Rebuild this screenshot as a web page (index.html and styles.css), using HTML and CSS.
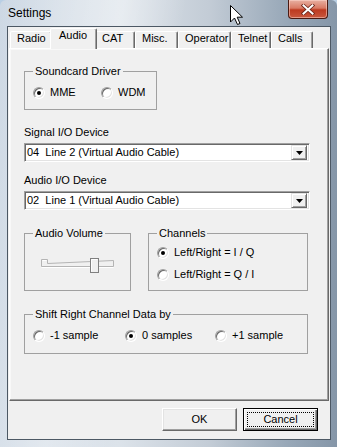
FILE: index.html
```html
<!DOCTYPE html>
<html lang="en">
<head>
    <meta charset="UTF-8">
    <title>Settings</title>
    <link rel="stylesheet" href="styles.css">
</head>
<body>
    <div class="window">
        <div class="titlebar">
            <span class="title">Settings</span>
            <div class="close-btn">
                <svg width="14" height="11" viewBox="0 0 14 11">
                    <path d="M2.5 1.5 L11.5 9.5 M11.5 1.5 L2.5 9.5" stroke="#6a2418" stroke-width="3.6" stroke-linecap="square"/>
                    <path d="M2.5 1.5 L11.5 9.5 M11.5 1.5 L2.5 9.5" stroke="#fff" stroke-width="2" stroke-linecap="square"/>
                </svg>
            </div>
        </div>

        <div class="client">
            <div class="tabs">
                <div class="tab tab-radio">Radio</div>
                <div class="tab tab-audio active">Audio</div>
                <div class="tab tab-cat">CAT</div>
                <div class="tab tab-misc">Misc.</div>
                <div class="tab tab-operator">Operator</div>
                <div class="tab tab-telnet">Telnet</div>
                <div class="tab tab-calls">Calls</div>
            </div>

            <div class="panel">
                <fieldset class="group group-driver">
                    <legend>Soundcard Driver</legend>
                    <div class="radio-row driver-row">
                        <div class="radio"><span class="dot on"></span>MME</div>
                        <div class="radio"><span class="dot"></span>WDM</div>
                    </div>
                </fieldset>

                <div class="field-label">Signal I/O Device</div>
                <div class="combo">
                    <span class="combo-text">04&nbsp; Line 2 (Virtual Audio Cable)</span>
                    <span class="combo-btn"><svg width="7" height="4"><polygon points="0,0 7,0 3.5,4" fill="#000"/></svg></span>
                </div>

                <div class="field-label second">Audio I/O Device</div>
                <div class="combo">
                    <span class="combo-text">02&nbsp; Line 1 (Virtual Audio Cable)</span>
                    <span class="combo-btn"><svg width="7" height="4"><polygon points="0,0 7,0 3.5,4" fill="#000"/></svg></span>
                </div>

                <div class="group-row">
                    <fieldset class="group group-volume">
                        <legend>Audio Volume</legend>
                        <svg class="slider" width="73" height="17" viewBox="0 0 73 17">
                            <path d="M0.5 9.5 V2.5 H6.5 V6.5 L72.5 3.5 V9.5 Z" fill="none" stroke="#b4b4b4"/>
                            <path d="M0.5 10.5 H72.5 M1.5 3.5 H5.5" stroke="#fff"/>
                            <rect x="49.5" y="1.5" width="8" height="14" fill="#f0f0f0" stroke="#808080"/>
                            <path d="M50.5 14.5 V2.5 H56.5" stroke="#fff" fill="none"/>
                        </svg>
                    </fieldset>
                    <fieldset class="group group-channels">
                        <legend>Channels</legend>
                        <div class="radio"><span class="dot on"></span>Left/Right = I / Q</div>
                        <div class="radio"><span class="dot"></span>Left/Right = Q / I</div>
                    </fieldset>
                </div>

                <fieldset class="group group-shift">
                    <legend>Shift Right Channel Data by</legend>
                    <div class="radio-row shift-row">
                        <div class="radio"><span class="dot"></span>-1 sample</div>
                        <div class="radio"><span class="dot on"></span>0 samples</div>
                        <div class="radio"><span class="dot"></span>+1 sample</div>
                    </div>
                </fieldset>
            </div>

            <div class="buttons">
                <button class="btn">OK</button>
                <button class="btn btn-default"><span class="focus">Cancel</span></button>
            </div>
        </div>

        <svg class="cursor" width="14" height="21" viewBox="0 0 14 21">
            <polygon points="0.5,0.5 0.5,17 4.5,13 7.5,19.5 10,18.5 7.2,12.2 12.5,12.2" fill="#fff" stroke="#000"/>
        </svg>
    </div>
</body>
</html>
```

FILE: styles.css
```css
* {
    box-sizing: border-box;
}
html, body {
    margin: 0;
    padding: 0;
}
body {
    width: 337px;
    height: 447px;
    overflow: hidden;
    font-family: "Liberation Sans", Arial, sans-serif;
    font-size: 11px;
    line-height: 13px;
    color: #000;
    background: #b9cfe4;
}

/* Vista glass frame */
.window {
    position: relative;
    height: 447px;
    padding: 0 6px 7px 7px;
    display: flex;
    flex-direction: column;
    border-radius: 6px 6px 0 0;
    background:
        linear-gradient(100deg, rgba(255,255,255,0) 0%, rgba(255,255,255,0.35) 30%, rgba(255,255,255,0) 45%),
        linear-gradient(to right, #cdd8e4 0%, #dce3ea 35%, #c3ccd6 62%, #98a8b8 85%, #8596a8 100%);
}
.titlebar {
    height: 26px;
    flex: none;
    display: flex;
    justify-content: space-between;
    align-items: flex-start;
}
.title {
    font-size: 12px;
    line-height: 15px;
    padding: 6px 0 0 1px;
    color: #000;
}
.close-btn {
    width: 40px;
    height: 19px;
    margin-right: 3px;
    border: 1px solid #4a1a12;
    border-top: none;
    border-radius: 0 0 4px 4px;
    display: flex;
    align-items: center;
    justify-content: center;
    background: linear-gradient(#e8b0a2 0%, #d97a64 45%, #bd3a20 55%, #c9583e 100%);
    box-shadow: inset 0 0 0 1px rgba(255, 220, 210, 0.5);
}
.cursor {
    position: absolute;
    left: 230px;
    top: 5px;
}

/* client area */
.client {
    flex: 1;
    border: 1px solid #4c5864;
    background: #f0f0f0;
    padding: 1px 1px 0 1px;
    display: flex;
    flex-direction: column;
}

/* tabs */
.tabs {
    height: 20px;
    flex: none;
    display: flex;
    align-items: flex-end;
    padding-left: 1px;
    position: relative;
    z-index: 1;
}
.tab {
    flex: none;
    height: 17px;
    padding: 0 0 0 6px;
    border: 1px solid;
    border-bottom: none;
    border-color: #fff #696969 transparent #fff;
    border-radius: 2px 2px 0 0;
    box-shadow: inset -1px 0 #a0a0a0;
    background: #f0f0f0;
    white-space: nowrap;
}
.tab.active {
    height: 21px;
    margin: 0 -2px -1px;
    padding-left: 8px;
    position: relative;
    z-index: 2;
}
.tab-radio { width: 42px; }
.tab-audio { width: 47px; }
.tab-cat { width: 40px; }
.tab-misc { width: 43px; }
.tab-operator { width: 53px; }
.tab-telnet { width: 40px; }
.tab-calls { width: 42px; }

.panel {
    height: 353px;
    flex: none;
    border: 1px solid;
    border-color: #fff #696969 #696969 #fff;
    box-shadow: inset -1px -1px #a0a0a0, inset 1px 1px #f8f8f8;
    padding: 16px 0 0 14px;
}

/* group boxes */
.group {
    margin: 0;
    padding: 8px 8px 10px;
    border: 1px solid #a0a0a0;
    min-width: 0;
}
.group legend {
    padding: 0 2px;
    margin: 0;
}
.group-driver {
    width: 133px;
}
.group-row {
    display: flex;
    gap: 17px;
    margin-top: 17px;
}
.group-volume {
    width: 107px;
    height: 64px;
    padding-top: 6px;
}
.group-channels {
    width: 160px;
    height: 64px;
    padding: 6px 8px 0;
    display: flex;
    flex-direction: column;
    gap: 9px;
}
.group-shift {
    width: 284px;
    margin-top: 17px;
    padding-bottom: 11px;
}
.slider {
    display: block;
    margin: 11px 0 0 8px;
}

/* radio buttons */
.radio-row {
    display: grid;
}
.driver-row {
    grid-template-columns: 68px auto;
}
.shift-row {
    grid-template-columns: 92px 90px auto;
}
.radio {
    display: flex;
    align-items: center;
    gap: 5px;
    height: 13px;
    white-space: nowrap;
}
.dot {
    flex: none;
    width: 12px;
    height: 12px;
    border-radius: 50%;
    background: #fff;
    border: 1px solid;
    border-color: #a0a0a0 #fff #fff #a0a0a0;
    box-shadow: inset 1px 1px #696969, inset -1px -1px #e3e3e3;
    position: relative;
}
.dot.on::after {
    content: "";
    position: absolute;
    left: 3px;
    top: 3px;
    width: 4px;
    height: 4px;
    border-radius: 50%;
    background: #000;
}

/* combo boxes */
.field-label {
    margin-top: 16px;
}
.field-label.second {
    margin-top: 12px;
}
.combo {
    width: 286px;
    height: 19px;
    margin-top: 4px;
    display: flex;
    align-items: center;
    background: #fff;
    border: 1px solid;
    border-color: #a0a0a0 #fff #fff #a0a0a0;
    box-shadow: inset 1px 1px #696969, inset -1px -1px #e3e3e3;
    padding: 0 2px 0 2px;
}
.combo-text {
    white-space: nowrap;
}
.combo-btn {
    margin-left: auto;
    width: 16px;
    height: 15px;
    display: flex;
    align-items: center;
    justify-content: center;
    background: #f0f0f0;
    border: 1px solid;
    border-color: #e3e3e3 #696969 #696969 #e3e3e3;
    box-shadow: inset 1px 1px #fff, inset -1px -1px #a0a0a0;
}

/* dialog buttons */
.buttons {
    display: flex;
    justify-content: flex-end;
    gap: 6px;
    padding: 7px 11px 0 0;
}
.btn {
    width: 75px;
    height: 23px;
    padding: 0;
    font: inherit;
    color: #000;
    background: #f0f0f0;
    border: 1px solid;
    border-color: #fff #696969 #696969 #fff;
    box-shadow: inset -1px -1px #a0a0a0, inset 1px 1px #e3e3e3;
}
.btn-default {
    border: 1px solid #000;
    box-shadow: inset 1px 1px #fff, inset -1px -1px #696969, inset -2px -2px #a0a0a0;
}
.focus {
    display: block;
    margin: 0 3px;
    height: 15px;
    border: 1px dotted #000;
    line-height: 13px;
}
```
